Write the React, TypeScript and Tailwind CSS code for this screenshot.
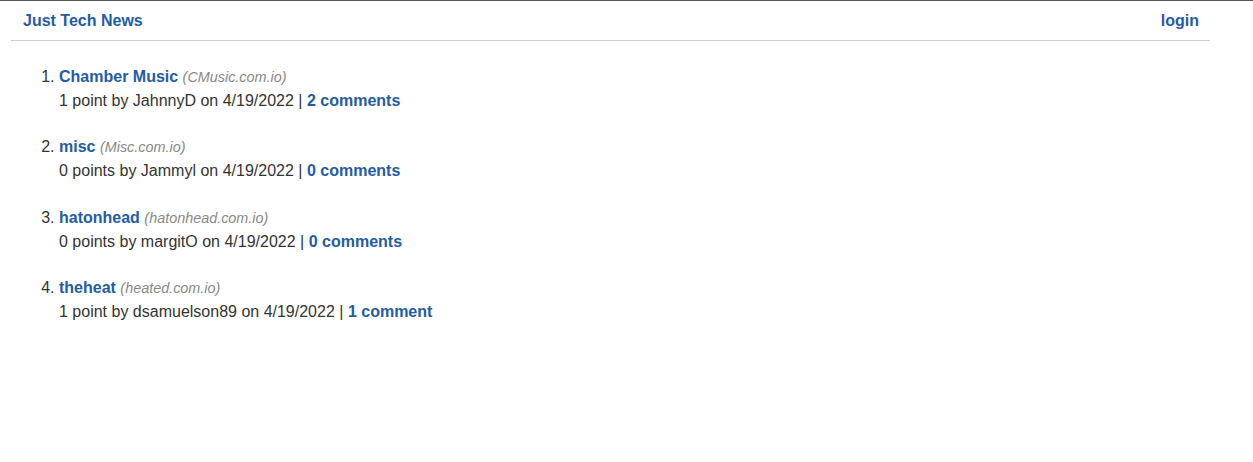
const posts = [
  { title: "Chamber Music", domain: "CMusic.com.io", points: 1, user: "JahnnyD", date: "4/19/2022", comments: 2 },
  { title: "misc", domain: "Misc.com.io", points: 0, user: "Jammyl", date: "4/19/2022", comments: 0 },
  { title: "hatonhead", domain: "hatonhead.com.io", points: 0, user: "margitO", date: "4/19/2022", comments: 0 },
  { title: "theheat", domain: "heated.com.io", points: 1, user: "dsamuelson89", date: "4/19/2022", comments: 1 },
];

export default function App() {
  return (
    <div className="min-h-screen bg-white border-t border-[#555] font-['Liberation_Sans',Arial,sans-serif] text-[16px] text-[#333]">
      <header className="ml-[11px] w-[1199px] h-[40px] flex items-center justify-between pl-[12px] pr-[11px] pt-[1px] border-b border-[#ccc]">
        <a className="font-bold text-[#245ca3]" href="#">Just Tech News</a>
        <a className="font-bold text-[#245ca3]" href="#">login</a>
      </header>
      <main className="ml-[11px] pt-[24px]">
        <ol className="list-decimal pl-[48px] flex flex-col gap-[22.33px]">
          {posts.map((p) => (
            <li key={p.title} className="leading-[24px]">
              <div>
                <a className="font-bold text-[#245ca3]" href="#">{p.title}</a>{" "}
                <span className="italic text-[14.4px] text-[#888]">({p.domain})</span>
              </div>
              <div>
                {p.points} {p.points === 1 ? "point" : "points"} by {p.user} on {p.date} |{" "}
                <a className="font-bold text-[#245ca3]" href="#">
                  {p.comments} {p.comments === 1 ? "comment" : "comments"}
                </a>
              </div>
            </li>
          ))}
        </ol>
      </main>
    </div>
  );
}
